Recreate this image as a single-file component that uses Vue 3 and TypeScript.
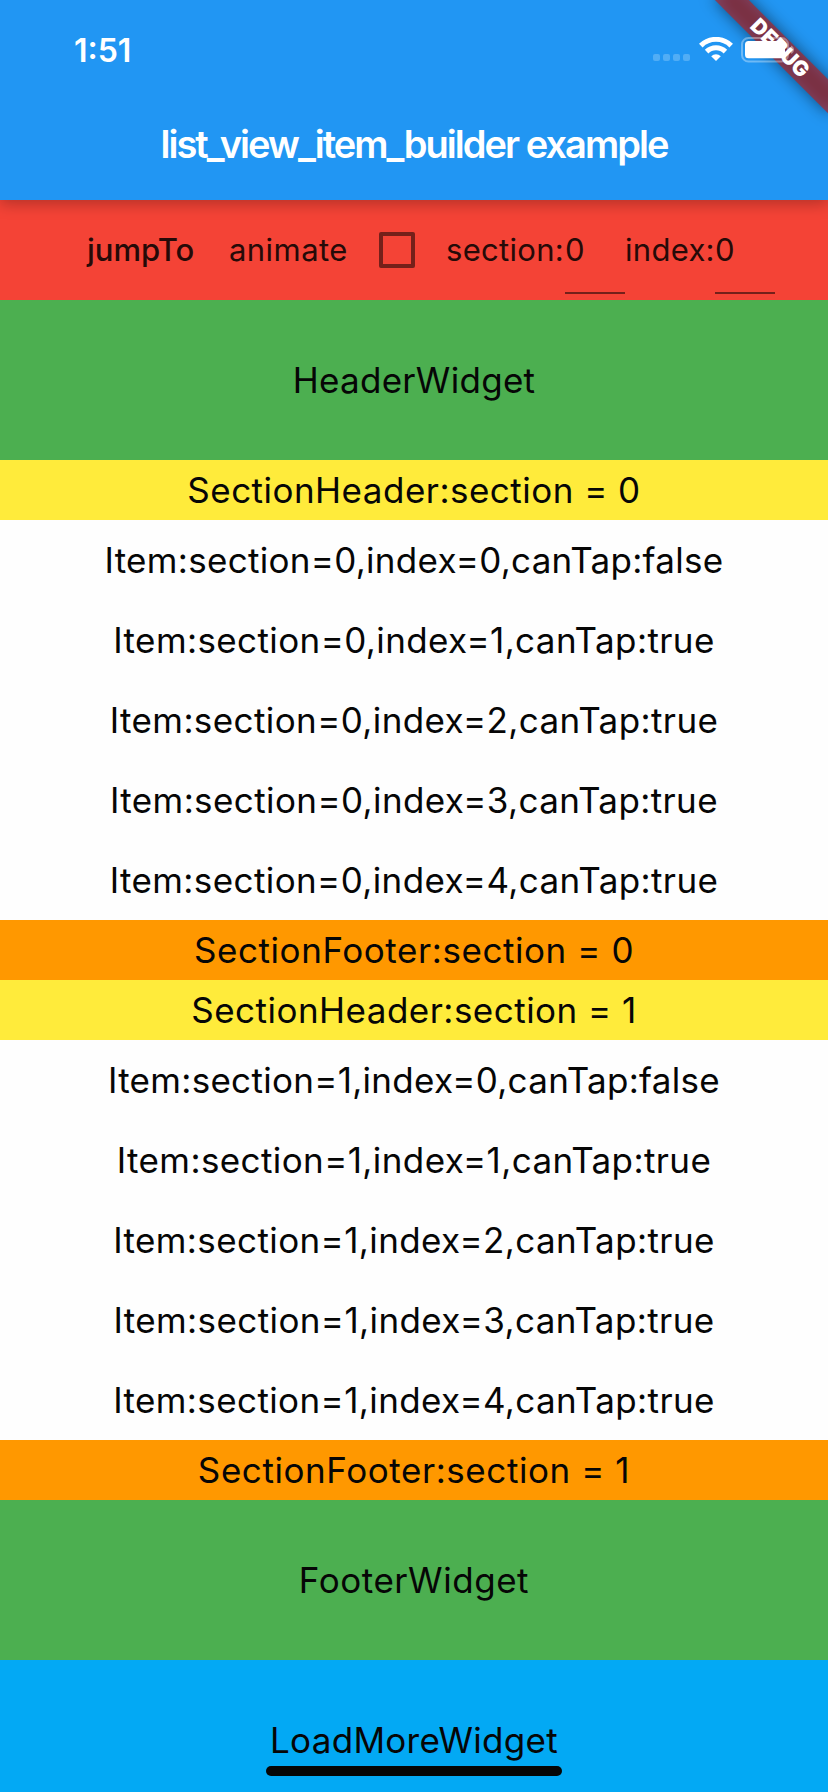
<script setup lang="ts">
interface Item {
  index: number
  canTap: boolean
}

interface Section {
  id: number
  items: Item[]
}

const sections: Section[] = [0, 1].map((id) => ({
  id,
  items: [0, 1, 2, 3, 4].map((index) => ({ index, canTap: index !== 0 })),
}))
</script>

<template>
  <div class="screen">
    <header class="app-bar">
      <div class="status-bar">
        <span class="clock">1:51</span>
        <div class="status-icons">
          <div class="cellular"><i v-for="n in 4" :key="n" /></div>
          <svg class="wifi" viewBox="0 0 34 24" width="34" height="24">
            <path d="M1.8 8.6a21.6 21.6 0 0 1 30.4 0" />
            <path d="M7.6 14.6a13.4 13.4 0 0 1 18.8 0" />
            <path class="dot" d="M12.2 19.2a7 7 0 0 1 9.6 0L17 24z" />
          </svg>
          <svg class="battery" viewBox="0 0 54 26" width="54" height="26">
            <rect class="shell" x="1" y="1" width="46" height="23.5" rx="6.5" />
            <rect class="charge" x="4" y="4" width="40" height="17.3" rx="3.5" />
            <path class="cap" d="M50 8.6q3 1.3 3 4.2t-3 4.2z" />
          </svg>
        </div>
      </div>
      <h1 class="title"><span>list_view_item_builder example</span></h1>
    </header>

    <div class="toolbar">
      <button class="jump">jumpTo</button>
      <span class="animate">animate</span>
      <span class="checkbox" />
      <span class="label section-label">section:</span>
      <span class="field">0</span>
      <span class="label index-label">index:</span>
      <span class="field">0</span>
    </div>

    <main class="list">
      <div class="block green"><span>HeaderWidget</span></div>
      <template v-for="s in sections" :key="s.id">
        <div class="row yellow"><span>SectionHeader:section = {{ s.id }}</span></div>
        <div v-for="item in s.items" :key="item.index" class="item" :class="{ tappable: item.canTap }">
          <span>Item:section={{ s.id }},index={{ item.index }},canTap:{{ item.canTap }}</span>
        </div>
        <div class="row orange"><span>SectionFooter:section = {{ s.id }}</span></div>
      </template>
      <div class="block green footer"><span>FooterWidget</span></div>
      <div class="block blue"><span>LoadMoreWidget</span></div>
    </main>

    <div class="banner"><span>DEBUG</span></div>
    <div class="home-indicator" />
  </div>
</template>

<style>
html,
body {
  margin: 0;
  overflow: hidden;
}
</style>

<style scoped>
.screen {
  position: relative;
  width: 828px;
  height: 1792px;
  overflow: hidden;
  background: #fefefe;
  color: #060606;
  font-family: Inter, "Liberation Sans", sans-serif;
  font-size: 35px;
  white-space: nowrap;
}
.app-bar {
  position: relative;
  height: 200px;
  background: #2196f3;
  color: #fff;
  box-shadow: 0 4px 14px rgba(0, 0, 0, 0.26);
}
.status-bar {
  display: flex;
  justify-content: space-between;
  height: 88px;
}
.clock {
  padding: 30px 0 0 74px;
  font-size: 32px;
  font-weight: 600;
  line-height: 41px;
}
.status-icons {
  position: relative;
  z-index: 3;
  display: flex;
  align-items: flex-start;
  padding: 37px 33px 0 0;
}
.cellular {
  display: flex;
  gap: 3px;
  margin: 17px 9px 0 0;
}
.cellular i {
  width: 7px;
  height: 7px;
  border-radius: 2px;
  background: rgba(255, 255, 255, 0.22);
}
.wifi {
  margin-right: 8px;
}
.wifi path {
  fill: none;
  stroke: #fff;
  stroke-width: 5;
}
.wifi .dot {
  fill: #fff;
  stroke: none;
}
.battery .shell {
  fill: none;
  stroke: rgba(255, 255, 255, 0.35);
  stroke-width: 2;
}
.battery .charge {
  fill: #fff;
}
.battery .cap {
  fill: rgba(255, 255, 255, 0.4);
}
.title {
  margin: 0;
  font-size: 38px;
  font-weight: 600;
  line-height: 113px;
  text-align: center;
  letter-spacing: -1.95px;
}
.toolbar {
  display: flex;
  align-items: center;
  height: 100px;
  padding-left: 87px;
  box-sizing: border-box;
  background: #f44336;
  color: #260a08;
  font-size: 31px;
}
.jump {
  width: 142px;
  padding: 0 0 2px;
  border: 0;
  background: none;
  color: inherit;
  font: inherit;
  font-weight: 500;
  text-align: left;
}
.animate {
  width: 150px;
  padding-bottom: 2px;
  letter-spacing: 0.45px;
}
.checkbox {
  width: 36px;
  height: 36px;
  margin-right: 31px;
  border: 4px solid #75201a;
  border-radius: 2px;
  box-sizing: border-box;
}
.label {
  padding-bottom: 2px;
  letter-spacing: 0.3px;
}
.section-label {
  width: 119px;
}
.index-label {
  width: 90px;
}
.field {
  width: 60px;
  height: 88px;
  border-bottom: 2px solid #75201a;
  box-sizing: border-box;
  line-height: 88px;
}
.block,
.row,
.item {
  display: flex;
  align-items: center;
  justify-content: center;
}
.block {
  height: 160px;
  letter-spacing: 0.3px;
}
.block.footer {
  letter-spacing: 0.55px;
}
.row {
  height: 60px;
  letter-spacing: 0.48px;
}
.item {
  height: 80px;
  letter-spacing: 0.3px;
}
.item.tappable {
  letter-spacing: 0.4px;
}
.green {
  background: #4caf50;
}
.yellow {
  background: #ffeb3b;
}
.orange {
  background: #ff9800;
  letter-spacing: 0.57px;
}
.blue {
  background: #03a9f4;
}
.banner {
  position: absolute;
  z-index: 2;
  top: 0;
  left: 828px;
  width: 0;
  height: 0;
  transform: rotate(45deg);
}
.banner::before,
.banner span {
  position: absolute;
  top: 56px;
  left: -80px;
  width: 160px;
  height: 24px;
}
.banner::before {
  content: "";
  background: rgba(0, 0, 0, 0.5);
  filter: blur(8px);
}
.banner span {
  background: rgba(183, 28, 28, 0.63);
  color: #fff;
  font-size: 21px;
  font-weight: 900;
  line-height: 24px;
  text-align: center;
}
.home-indicator {
  position: absolute;
  left: 266px;
  bottom: 16px;
  width: 296px;
  height: 10px;
  border-radius: 5px;
  background: #060606;
}
</style>
